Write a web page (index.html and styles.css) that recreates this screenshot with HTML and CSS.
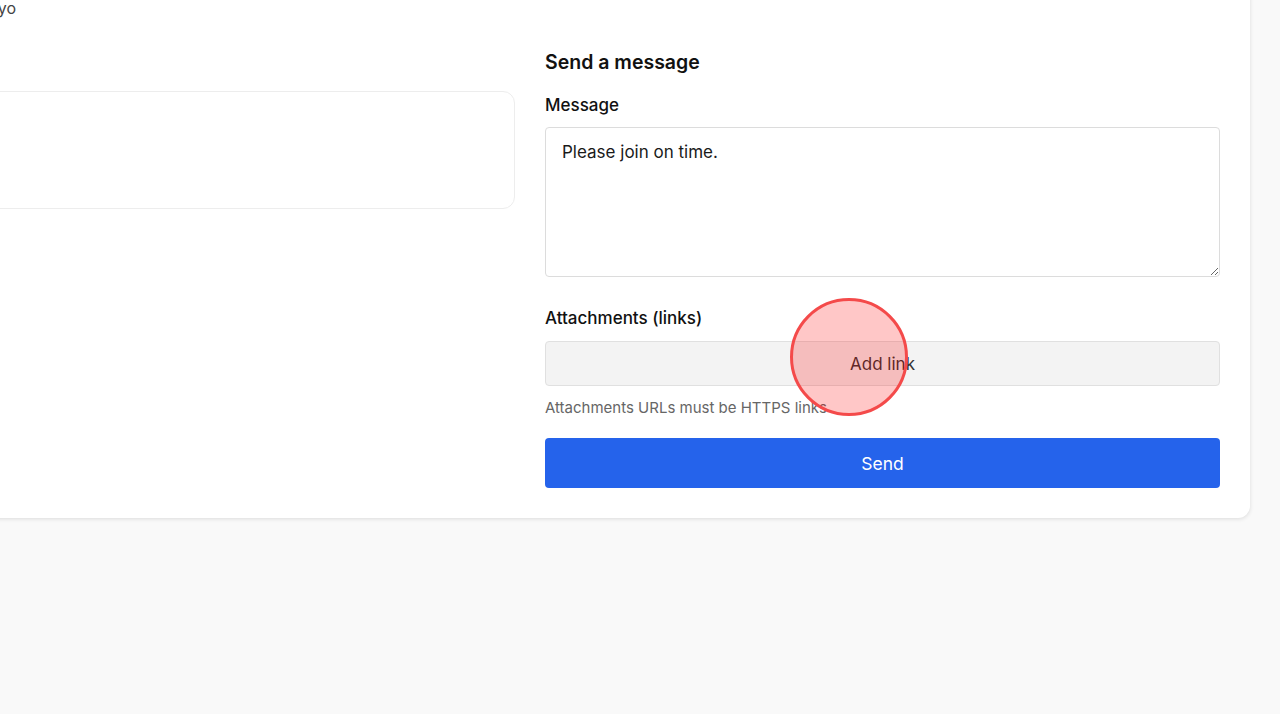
FILE: index.html
```html
<!DOCTYPE html>
<html>
<head>
  <meta charset="UTF-8">
  <title>Send a message</title>
  <link rel="stylesheet" href="styles.css">
</head>
<body>
  <div class="card">
    <div class="details">
      <div class="detail-line">Asia/Tokyo</div>
      <div class="detail-box"></div>
    </div>

    <form class="compose">
      <h2 class="compose-title">Send a message</h2>

      <label class="field-label" for="message">Message</label>
      <textarea id="message" class="message-input">Please join on time.</textarea>

      <div class="field-label attach-label">Attachments (links)</div>
      <button type="button" class="add-link">Add link</button>
      <p class="hint">Attachments URLs must be HTTPS links</p>

      <button type="button" class="send">Send</button>
    </form>
  </div>

  <div class="click-marker"></div>
</body>
</html>
```

FILE: styles.css
```css
html, body {
  margin: 0;
  padding: 0;
  height: 100%;
}

body {
  font-family: Inter, 'Noto Sans', 'Liberation Sans', sans-serif;
  background: #f9f9f9;
  color: #1a1a1a;
  overflow: hidden;
  position: relative;
}

.card {
  width: 1440px;
  margin: -60px 0 0 -190px;
  padding: 30px;
  box-sizing: border-box;
  background: white;
  border-radius: 12px;
  box-shadow: 0 1px 4px rgba(0, 0, 0, 0.12);
  display: grid;
  grid-template-columns: 1fr 1fr;
  gap: 30px;
}

.details {
  display: flex;
  flex-direction: column;
}

.detail-line {
  width: 176px;
  margin-top: 26px;
  text-align: right;
  font-size: 16px;
  line-height: 24px;
  color: #444;
}

.detail-box {
  margin-top: 71px;
  height: 118px;
  border: 1px solid #ededed;
  border-radius: 12px;
  box-sizing: border-box;
}

.compose {
  display: flex;
  flex-direction: column;
  margin: 0;
}

.compose-title {
  margin: 78px 0 0 0;
  font-size: 19.5px;
  line-height: 28px;
  font-weight: 600;
  color: #111;
}

.field-label {
  margin-top: 17px;
  margin-bottom: 10px;
  font-size: 17px;
  line-height: 24px;
  font-weight: 500;
  color: #111;
}

.message-input {
  height: 150px;
  padding: 12px 16px;
  box-sizing: border-box;
  border: 1px solid #dcdcdc;
  border-radius: 4px;
  font-family: inherit;
  font-size: 17px;
  line-height: 24px;
  color: #1a1a1a;
  resize: vertical;
  outline: none;
}

.attach-label {
  margin-top: 29px;
  margin-bottom: 11px;
}

.add-link {
  height: 45px;
  background: #f3f3f3;
  border: 1px solid #e0e0e0;
  border-radius: 4px;
  font-family: inherit;
  font-size: 17px;
  padding-top: 2px;
  color: #333;
  cursor: pointer;
}

.hint {
  margin: 12px 0 0 0;
  font-size: 15px;
  line-height: 20px;
  color: #666;
}

.send {
  margin-top: 20px;
  height: 50px;
  background: #2563eb;
  border: none;
  border-radius: 4px;
  font-family: inherit;
  font-size: 17.5px;
  padding-top: 2px;
  color: white;
  cursor: pointer;
}

/* click indicator */
.click-marker {
  position: absolute;
  left: 790px;
  top: 298px;
  width: 118px;
  height: 118px;
  box-sizing: border-box;
  border: 3px solid #f44a4a;
  border-radius: 50%;
  background: rgba(255, 0, 0, 0.22);
}
```
